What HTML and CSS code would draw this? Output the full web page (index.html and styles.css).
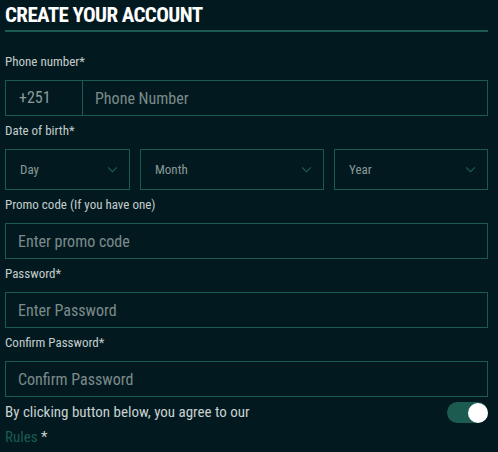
FILE: index.html
```html
<!DOCTYPE html>
<html lang="en">
<head>
    <meta charset="UTF-8">
    <meta name="viewport" content="width=device-width, initial-scale=1.0">
    <title>Create your account</title>
    <link rel="stylesheet" href="styles.css">
</head>
<body>
    <div class="register">
        <h1 class="title">CREATE YOUR ACCOUNT</h1>
        <form class="register-form">
            <label class="field-label">Phone number*</label>
            <div class="phone-box">
                <span class="prefix">+251</span>
                <input type="text" class="phone-input" placeholder="Phone Number">
            </div>

            <label class="field-label">Date of birth*</label>
            <div class="dob-row">
                <div class="select select-day"><span>Day</span><svg class="chevron" viewBox="0 0 12 8"><path d="M1 1.5 6 6.5 11 1.5"/></svg></div>
                <div class="select select-month"><span>Month</span><svg class="chevron" viewBox="0 0 12 8"><path d="M1 1.5 6 6.5 11 1.5"/></svg></div>
                <div class="select select-year"><span>Year</span><svg class="chevron" viewBox="0 0 12 8"><path d="M1 1.5 6 6.5 11 1.5"/></svg></div>
            </div>

            <label class="field-label">Promo code (If you have one)</label>
            <input type="text" class="text-input" placeholder="Enter promo code">

            <label class="field-label">Password*</label>
            <input type="password" class="text-input" placeholder="Enter Password">

            <label class="field-label">Confirm Password*</label>
            <input type="password" class="text-input" placeholder="Confirm Password">

            <div class="agree-row">
                <p class="agree-text">By clicking button below, you agree to our<br><a href="#" class="rules-link">Rules</a> *</p>
                <span class="toggle"><span class="knob"></span></span>
            </div>
        </form>
    </div>
</body>
</html>
```

FILE: styles.css
```css
body {
    font-family: 'Roboto Condensed', 'Roboto', 'Liberation Sans', sans-serif;
    background-color: #021a1f;
    color: #c9d1d1;
    margin: 0;
    padding: 0 10px 0 5px;
}
.title {
    margin: 0;
    padding-top: 3px;
    height: 27px;
    font-size: 21px;
    line-height: 25px;
    font-weight: 700;
    letter-spacing: -0.6px;
    color: #ffffff;
    border-bottom: 2px solid #1b5a50;
}
.register-form {
    display: flex;
    flex-direction: column;
}
.field-label {
    font-size: 13px;
    line-height: 14px;
    color: #c4cccc;
    margin: 8px 0 11px;
}
.title + .register-form .field-label:first-child {
    margin-top: 23px;
}
.phone-box {
    display: flex;
    height: 36px;
    border: 1px solid #1b5a50;
    box-sizing: border-box;
}
.prefix {
    width: 77px;
    border-right: 1px solid #1b5a50;
    padding-left: 13px;
    box-sizing: border-box;
    font-size: 16px;
    line-height: 34px;
    color: #8d9a9a;
}
.phone-input,
.text-input {
    font-family: inherit;
    background: transparent;
    border: none;
    outline: none;
    font-size: 16px;
    color: #c9d1d1;
}
.phone-input {
    flex: 1;
    padding: 0 12px;
}
.text-input {
    height: 36px;
    box-sizing: border-box;
    border: 1px solid #1b5a50;
    padding: 0 12px;
}
.phone-input::placeholder,
.text-input::placeholder {
    color: #7d8a8b;
}
.dob-row {
    display: flex;
    gap: 10px;
}
.select {
    height: 41px;
    box-sizing: border-box;
    border: 1px solid #1b5a50;
    display: flex;
    align-items: center;
    justify-content: space-between;
    padding: 0 11px 0 14px;
    font-size: 13px;
    color: #8a9899;
}
.select-day { width: 125px; }
.select-month { width: 184px; }
.select-year { width: 154px; }
.chevron {
    width: 11px;
    height: 7px;
    fill: none;
    stroke: #1d5e54;
    stroke-width: 1.2;
}
.agree-row {
    display: flex;
    justify-content: space-between;
    align-items: flex-start;
    margin-top: 3px;
}
.agree-text {
    margin: 0;
    font-size: 15px;
    line-height: 25px;
    color: #c9d1d1;
}
.rules-link {
    color: #1b5a50;
    text-decoration: none;
}
.toggle {
    width: 41px;
    height: 21px;
    margin-top: 2px;
    border-radius: 11px;
    background-color: #1c5b50;
    display: flex;
    justify-content: flex-end;
    align-items: center;
}
.knob {
    width: 20px;
    height: 20px;
    border-radius: 50%;
    background-color: #ffffff;
}
```
